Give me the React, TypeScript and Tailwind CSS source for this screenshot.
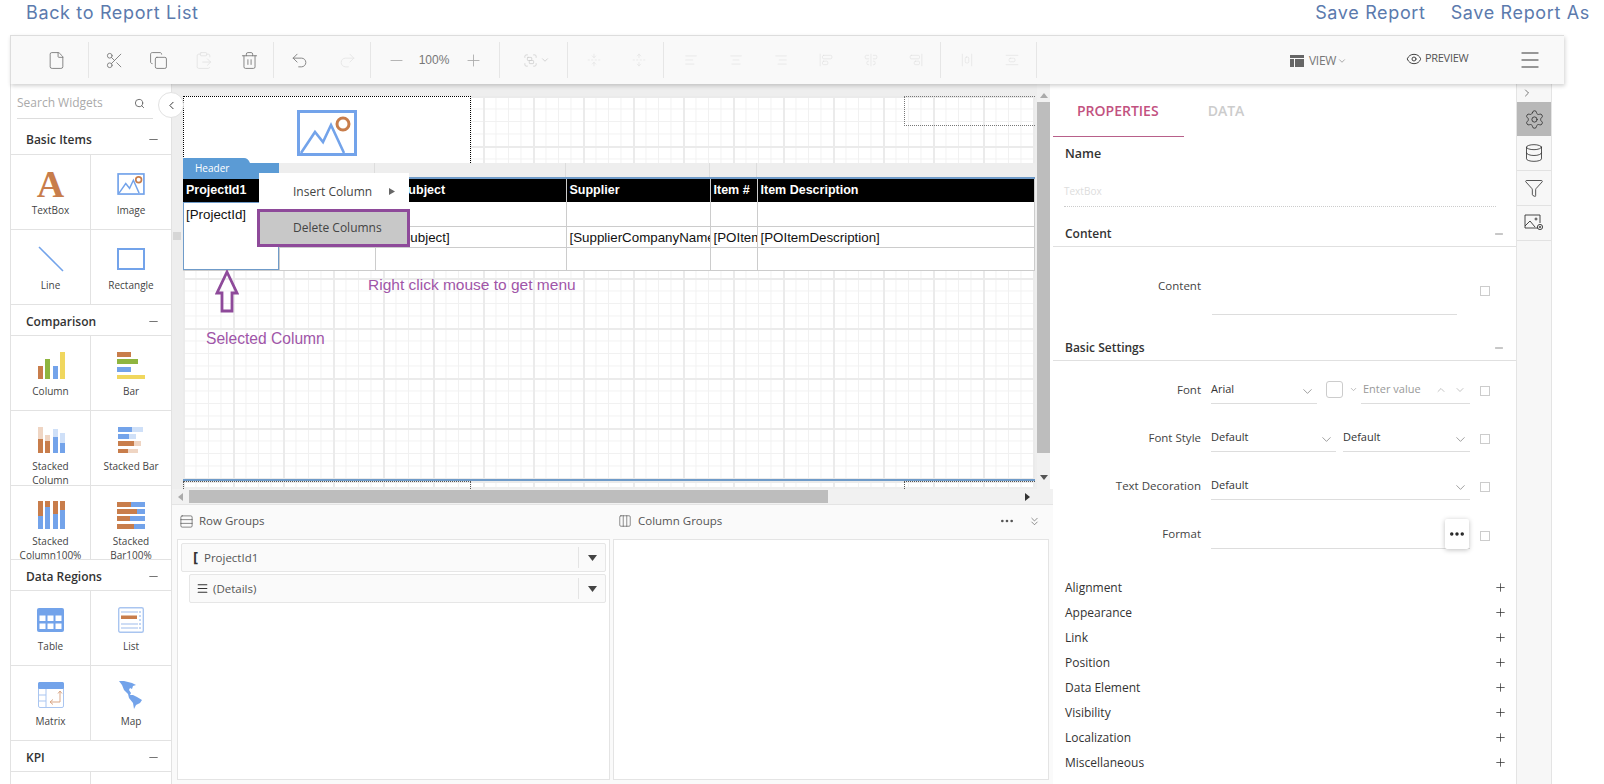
import React from "react";
import { File, Scissors, Copy, ClipboardPaste, Trash2, Undo2, Redo2, Minus, Plus, Search, ChevronLeft, ChevronRight, ChevronDown, ChevronUp, ChevronsDown, Eye, Settings, Database, Funnel, Rows3, Columns3, Ellipsis, Menu, Group, FoldVertical, UnfoldVertical, AlignLeft, AlignCenter, AlignRight, AlignStartVertical, AlignCenterVertical, AlignEndVertical, AlignHorizontalSpaceAround, AlignVerticalSpaceAround } from "lucide-react";

const B = "#c87d4b", U = "#73a3ea", G = "#8fb53f", Y = "#f0d75e", LB = "#cfe0f8", LO = "#efd5c3";

const gridBg = "bg-white bg-[linear-gradient(to_right,#ebebeb_2px,transparent_2px),linear-gradient(to_bottom,#ebebeb_2px,transparent_2px),linear-gradient(to_right,#f1f1f1_1px,transparent_1px),linear-gradient(to_bottom,#f1f1f1_1px,transparent_1px)] bg-[size:50px_50px,50px_50px,12.5px_12.5px,12.5px_12.5px]";

function Sep({ className = "" }: { className?: string }) {
  return <div className={`w-px h-[36px] bg-[#e6e6e6] shrink-0 ${className}`} />;
}
function TB({ children, w = "w-[45px]", className = "" }: { children: React.ReactNode; w?: string; className?: string }) {
  return <div className={`${w} h-full flex items-center justify-center shrink-0 ${className}`}>{children}</div>;
}

function Toolbar() {
  const on = { size: 19, strokeWidth: 1.1, color: "#777" };
  const off = { size: 14, strokeWidth: 1, color: "#dedede" };
  return (
    <div className="relative z-20 ml-[10px] w-[1554px] h-[49px] bg-[#f9f9f9] border-t border-[#dddddd] border-l shadow-[1px_2px_4px_rgba(0,0,0,0.18)] flex items-center pl-[18px] [font-family:Open_Sans,sans-serif]">
      <TB w="w-[54px]"><File {...on} /></TB>
      <Sep className="ml-[5px]" />
      <TB w="w-[47px]"><Scissors {...on} className="translate-x-[2px]" /></TB>
      <TB><Copy {...on} /></TB>
      <TB><ClipboardPaste {...on} color="#e2e2e2" /></TB>
      <TB w="w-[47px]"><Trash2 {...on} /></TB>
      <Sep />
      <TB w="w-[50px]"><Undo2 {...on} /></TB>
      <TB w="w-[46px]"><Redo2 {...on} color="#e4e4e4" /></TB>
      <Sep />
      <TB w="w-[50px]"><Minus {...on} color="#aaa" /></TB>
      <div className="w-[26px] flex justify-center text-[12px] text-[#777] [font-family:Liberation_Sans,sans-serif] shrink-0">100%</div>
      <TB w="w-[52px]"><Plus {...on} color="#aaa" /></TB>
      <Sep />
      <TB w="w-[67px]">
        <div className="flex items-center gap-[2px] translate-x-[3px]"><Group size={15} strokeWidth={1.2} color="#cccccc" /><ChevronDown size={10} color="#cccccc" /></div>
      </TB>
      <Sep />
      <TB className="ml-[3px]"><FoldVertical {...off} /></TB>
      <TB><UnfoldVertical {...off} /></TB>
      <Sep className="ml-[2px]" />
      <TB className="ml-[4px]"><AlignLeft {...off} /></TB>
      <TB><AlignCenter {...off} /></TB>
      <TB><AlignRight {...off} /></TB>
      <TB><AlignStartVertical {...off} /></TB>
      <TB><AlignCenterVertical {...off} /></TB>
      <TB><AlignEndVertical {...off} /></TB>
      <Sep className="ml-[2px]" />
      <TB className="ml-[3px]"><AlignHorizontalSpaceAround {...off} /></TB>
      <TB><AlignVerticalSpaceAround {...off} /></TB>
      <Sep className="ml-[2px]" />
      <div className="ml-[253px] flex items-center w-[60px] mt-[2px] shrink-0">
        <svg width="14" height="12" viewBox="0 0 14 12" className="mr-[5px] shrink-0"><path d="M0 0h14v3H0zM0 4h4v8H0zM5 4h9v8H5z" fill="#666" /></svg>
        <span className="text-[12px] text-[#777] tracking-[-0.3px]">VIEW</span>
        <ChevronDown size={10} color="#999" className="ml-[1px]" />
      </div>
      <div className="ml-[56px] flex items-center -mt-[3px] w-[70px] shrink-0">
        <Eye size={16} strokeWidth={1.5} color="#444" className="mr-[3px]" />
        <span className="text-[11px] text-[#555] tracking-[-0.3px]">PREVIEW</span>
      </div>
      <div className="ml-[42px] shrink-0"><Menu size={24} strokeWidth={1.4} color="#777" /></div>
    </div>
  );
}

function Shape({ n }: { n: string }) {
  switch (n) {
    case "A":
      return <span className="[font-family:Liberation_Serif,serif] font-bold text-[38px] leading-[28px] text-[#c87d4b]">A</span>;
    case "image":
      return (
        <svg width="28" height="22" viewBox="0 0 58 46">
          <rect x="2" y="2" width="54" height="42" fill="none" stroke={U} strokeWidth="3.5" />
          <path d="M4 42 L18 22 L26 32 L34 15 L46 42" fill="none" stroke={U} strokeWidth="3" />
          <circle cx="45" cy="14" r="6" fill="none" stroke={B} strokeWidth="3.5" />
        </svg>
      );
    case "line":
      return <svg width="28" height="28" viewBox="0 0 28 28"><path d="M2 2 L26 26" stroke={U} strokeWidth="1.6" /></svg>;
    case "rect":
      return <svg width="28" height="22" viewBox="0 0 28 22"><rect x="1" y="1" width="26" height="20" fill="none" stroke={U} strokeWidth="2" /></svg>;
    case "column":
      return (
        <svg width="28" height="27" viewBox="0 0 28 27">
          <rect x="1" y="14" width="5" height="13" fill={B} /><rect x="8" y="7" width="5" height="20" fill={G} />
          <rect x="16" y="14" width="5" height="13" fill={U} /><rect x="23" y="0" width="5" height="27" fill={Y} />
        </svg>
      );
    case "bar":
      return (
        <svg width="28" height="27" viewBox="0 0 28 27">
          <rect x="0" y="0" width="14" height="5" fill={B} /><rect x="0" y="7" width="21" height="5" fill={G} />
          <rect x="0" y="15" width="14" height="5" fill={U} /><rect x="0" y="23" width="28" height="4" fill={Y} />
        </svg>
      );
    case "scol":
      return (
        <svg width="28" height="26" viewBox="0 0 28 26">
          <rect x="1" y="0" width="5" height="12" fill={LO} /><rect x="1" y="12" width="5" height="14" fill={B} />
          <rect x="8" y="8" width="5" height="6" fill={LO} /><rect x="8" y="14" width="5" height="12" fill={B} />
          <rect x="16" y="2" width="5" height="8" fill={LB} /><rect x="16" y="10" width="5" height="16" fill={U} />
          <rect x="23" y="6" width="5" height="10" fill={LB} /><rect x="23" y="16" width="5" height="10" fill={U} />
        </svg>
      );
    case "sbar":
      return (
        <svg width="26" height="28" viewBox="0 0 26 28">
          <rect x="0" y="1" width="14" height="5" fill={U} /><rect x="14" y="1" width="11" height="5" fill={LB} />
          <rect x="0" y="8" width="11" height="5" fill={U} /><rect x="11" y="8" width="7" height="5" fill={LB} />
          <rect x="0" y="15" width="16" height="5" fill={B} /><rect x="16" y="15" width="7" height="5" fill={LO} />
          <rect x="0" y="23" width="10" height="4" fill={B} /><rect x="10" y="23" width="10" height="4" fill={LO} />
        </svg>
      );
    case "scol100":
      return (
        <svg width="28" height="28" viewBox="0 0 28 28">
          {[1, 8, 16, 23].map((x, i) => (
            <g key={x}><rect x={x} y="0" width="5" height="28" fill={U} /><rect x={x} y="0" width="5" height={[15, 6, 13, 9][i]} fill={B} /></g>
          ))}
        </svg>
      );
    case "sbar100":
      return (
        <svg width="28" height="28" viewBox="0 0 28 28">
          {[1, 8, 15, 23].map((y, i) => (
            <g key={y}><rect x="0" y={y} width="28" height="5" fill={U} /><rect x="0" y={y} width={[14, 20, 13, 17][i]} height="5" fill={B} /></g>
          ))}
        </svg>
      );
    case "table":
      return (
        <svg width="27" height="24" viewBox="0 0 27 24">
          <rect width="27" height="24" rx="2" fill={U} />
          {[2, 10, 18].map((x) => [8, 16].map((y) => <rect key={x + "-" + y} x={x + 0.5} y={y - 0.5} width="6" height="5.5" fill="#fff" />))}
        </svg>
      );
    case "list":
      return (
        <svg width="26" height="26" viewBox="0 0 26 26">
          <rect x="0.7" y="0.7" width="24.6" height="24.6" rx="1.5" fill="none" stroke="#a9c5f0" strokeWidth="1.4" />
          <path d="M3 5h17M3 17h17M3 21h17" stroke="#9dbcec" strokeWidth="1.2" />
          <rect x="3" y="8.5" width="16" height="3.5" fill={B} />
          <path d="M22 4v18" stroke="#9dbcec" strokeWidth="1.2" strokeDasharray="2 2" />
        </svg>
      );
    case "matrix":
      return (
        <svg width="26" height="26" viewBox="0 0 26 26">
          <rect x="0.5" y="0.5" width="25" height="25" rx="1.5" fill="none" stroke="#a9c5f0" />
          <rect width="26" height="7" rx="1.5" fill={U} />
          <path d="M8 7v19M0 13h8M0 19h8" stroke="#a9c5f0" />
          <path d="M22 9v11H12M12 20l3-2.5M12 20l3 2.5M22 9l-2 2.5M22 9l2 2.5" fill="none" stroke="#d9a787" />
        </svg>
      );
    case "map":
      return (
        <svg width="24" height="28" viewBox="0 0 24 28">
          <path d="M0 0 L5 0 L9 1 L13 2 L17 4 L14 5 L13 8 L11 7 L10 9 L12 12 L11 14 L14 14 L18 16 L23 19 L21 22 L17 24 L15 28 L14 22 L10 17 L9 13 L5 9 L3 4 Z" fill={U} />
        </svg>
      );
  }
  return null;
}

function Item({ icon, label, h = "h-[75px]", right }: { icon: string; label: React.ReactNode; h?: string; right?: boolean }) {
  return (
    <div className={`${h} ${right ? "" : "border-r border-[#e2e2e2]"} border-b border-[#e2e2e2] flex flex-col items-center pt-[15px]`}>
      <div className="h-[28px] flex items-center justify-center shrink-0"><Shape n={icon} /></div>
      <div className="mt-[5px] text-[10px] leading-[14px] text-[#444] text-center">{label}</div>
    </div>
  );
}

function Head({ t, h = "h-[31px]", pt = "pt-[3px]" }: { t: string; h?: string; pt?: string }) {
  return (
    <div className={`${h} ${pt} flex items-center justify-between pl-[15px] pr-[11px] border-b border-[#e2e2e2]`}>
      <span className="text-[12px] font-semibold text-[#333]">{t}</span>
      <Minus size={13} strokeWidth={1.5} color="#555" />
    </div>
  );
}

function Sidebar() {
  return (
    <div className="w-[162px] h-full shrink-0 overflow-hidden bg-white border-l border-r border-[#e2e2e2] [font-family:Open_Sans,sans-serif]">
      <div className="h-[35px] mx-[6px] w-[136px] flex items-center justify-between border-b border-[#dddddd] pr-[8px] pt-[4px]">
        <span className="text-[12px] text-[#aaa]">Search Widgets</span>
        <Search size={11} strokeWidth={2} color="#666" />
      </div>
      <Head t="Basic Items" h="h-[36px]" pt="pt-[6px]" />
      <div className="grid grid-cols-[80px_1fr]">
        <Item icon="A" label="TextBox" />
        <Item icon="image" label="Image" right />
        <Item icon="line" label="Line" />
        <Item icon="rect" label="Rectangle" right />
      </div>
      <Head t="Comparison" />
      <div className="grid grid-cols-[80px_1fr]">
        <Item icon="column" label="Column" />
        <Item icon="bar" label="Bar" right />
        <Item icon="scol" label={<>Stacked<br />Column</>} />
        <Item icon="sbar" label="Stacked Bar" right />
        <Item icon="scol100" label={<>Stacked<br />Column100%</>} h="h-[74px]" />
        <Item icon="sbar100" label={<>Stacked<br />Bar100%</>} h="h-[74px]" right />
      </div>
      <Head t="Data Regions" />
      <div className="grid grid-cols-[80px_1fr]">
        <Item icon="table" label="Table" />
        <Item icon="list" label="List" right />
        <Item icon="matrix" label="Matrix" />
        <Item icon="map" label="Map" right />
      </div>
      <Head t="KPI" />
      <div className="grid grid-cols-[80px_1fr]">
        <Item icon="" label="" />
        <Item icon="" label="" right />
      </div>
    </div>
  );
}

const hCell = "border-r border-[#cccccc] px-[3px] text-left font-bold text-white text-[12.5px] overflow-hidden whitespace-nowrap";
const dCell = "border-r border-b border-[#cccccc] pl-[3px] pr-0 pt-[2px] text-left font-normal text-[#111] text-[13.33px] overflow-hidden whitespace-nowrap";

function ReportTable() {
  return (
    <table className="table-fixed border-collapse w-[852px] bg-white [font-family:Liberation_Sans,sans-serif] leading-none">
      <colgroup>
        <col className="w-[96px]" /><col className="w-[96px]" /><col className="w-[191px]" /><col className="w-[144px]" /><col className="w-[47px]" /><col />
      </colgroup>
      <tbody>
        <tr className="h-[23px] bg-black">
          <td className={hCell}>ProjectId1</td><td className={hCell}></td><td className={hCell}>PO Subject</td><td className={hCell}>Supplier</td><td className={hCell}>Item #</td><td className={hCell}>Item Description</td>
        </tr>
        <tr className="h-[24px]">
          <td rowSpan={3} className={`${dCell} align-top !pt-[6px]`}>[ProjectId]</td>
          <td className={dCell}></td><td className={dCell}></td><td className={dCell}></td><td className={dCell}></td><td className={dCell}></td>
        </tr>
        <tr className="h-[21px]">
          <td className={dCell}></td><td className={dCell}>[POSubject]</td><td className={dCell}>[SupplierCompanyName]</td><td className={dCell}>[POItemNo]</td><td className={dCell}>[POItemDescription]</td>
        </tr>
        <tr className="h-[23px]">
          <td className={dCell}></td><td className={dCell}></td><td className={dCell}></td><td className={dCell}></td><td className={dCell}></td>
        </tr>
      </tbody>
    </table>
  );
}

function Design() {
  return (
    <div className="relative w-[865px] h-[405px] overflow-hidden bg-[#eeeeee]">
      <div className="h-[12px]" />
      <div className="pl-[11px]">
        {/* report header */}
        <div className={`relative h-[67px] w-[852px] ${gridBg}`}>
          <div className="w-[288px] h-[67px] bg-white border-r border-l border-t border-dotted border-black flex justify-center pt-[13px]">
            <svg width="60" height="46" viewBox="0 0 60 46">
              <rect x="1.5" y="1.5" width="57" height="43" fill="#fff" stroke={U} strokeWidth="3" />
              <path d="M4 43 L18 22 L26 32 L34 15 L47 43" fill="none" stroke={U} strokeWidth="2.6" />
              <circle cx="46" cy="14" r="6" fill="none" stroke={B} strokeWidth="3" />
            </svg>
          </div>
          <div className="absolute right-0 top-0 w-[131px] h-[30px] border-l border-b border-t border-dotted border-[#777]" />
        </div>
        {/* header band */}
        <div className="h-[14px] w-[852px] bg-[#eeeeee] flex">
          {[96, 96, 191, 144, 47].map((w, i) => (
            <div key={i} style={{ width: w }} className="border-r border-[#dddddd] h-full" />
          ))}
        </div>
        {/* body */}
        <div className={`w-[852px] h-[302px] border-t-2 border-[#6f9bc9] ${gridBg} bg-[position:0_-1px]`}>
          <ReportTable />
        </div>
        {/* footer */}
        <div className={`w-[852px] h-[8px] border-t-2 border-[#6f9bc9] ${gridBg}`}>
          <div className="flex justify-between">
            <div className="w-[288px] h-[8px] border-t border-r border-l border-dotted border-[#555]" />
            <div className="w-[131px] h-[8px] border-t border-l border-dotted border-[#555]" />
          </div>
        </div>
      </div>
      {/* left ruler handle */}
      <div className="absolute left-0 top-[148px] w-[8px] h-[8px] ml-[1px] bg-[#d6d6d6]" />
      {/* tab */}
      <div className="absolute left-[11px] top-[74px] w-[96px] h-[21px]">
        <svg width="96" height="21" viewBox="0 0 96 21" className="absolute inset-0"><path d="M0 0 H61 Q65 0 67 5 H96 V21 H0 Z" fill="#5b9bd5" /></svg>
        <span className="absolute left-[12px] top-[3px] text-[10px] text-white [font-family:Open_Sans,sans-serif]">Header</span>
      </div>
      {/* selected col */}
      <div className="absolute left-[11px] top-[118px] w-[96px] h-[68px] border border-[#6f9bc9]" />
      {/* context menu */}
      <div className="absolute left-[87px] top-[89px] w-[150px] [font-family:Open_Sans,sans-serif] text-[12px] text-[#444]">
        <div className="h-[37px] bg-white flex items-center pl-[34px] pr-[14px] justify-between">
          <span>Insert Column</span>
          <svg width="6" height="7" viewBox="0 0 6 7"><path d="M0 0L6 3.5L0 7Z" fill="#666" /></svg>
        </div>
        <div className="h-[38px] -ml-[2px] w-[153px] -mt-[1px] bg-[#c8c8c8] border-[3px] border-[#8e4a9a] flex items-center pl-[33px]">Delete Columns</div>
      </div>
      {/* annotations */}
      <svg width="24" height="44" viewBox="0 0 24 44" className="absolute left-[43px] top-[186px]">
        <path d="M12 2 L22 23 H17 V41 H7 V23 H2 Z" fill="none" stroke="#8e4a9a" strokeWidth="2.8" />
      </svg>
      <div className="absolute left-[34px] top-[246px] text-[15.6px] leading-[18px] text-[#a055a8] [font-family:Liberation_Sans,sans-serif] whitespace-nowrap">Selected Column</div>
      <div className="absolute left-[196px] top-[192px] text-[15.5px] leading-[18px] text-[#a055a8] [font-family:Liberation_Sans,sans-serif] whitespace-nowrap">Right click mouse to get menu</div>
    </div>
  );
}

function Bottom() {
  return (
    <div className="flex-1 min-h-0 bg-[#fafafa] border-t border-[#e4e4e4] [font-family:Open_Sans,sans-serif] text-[11.5px] text-[#555] overflow-hidden">
      <div className="h-[34px] pb-[2px] flex items-center relative whitespace-nowrap">
        <Rows3 size={15} strokeWidth={1} color="#444" className="ml-[7px] shrink-0" />
        <span className="ml-[5px] w-[70px]">Row Groups</span>
        <Columns3 size={14} strokeWidth={1} color="#444" className="ml-[349px] shrink-0" />
        <span className="ml-[6px] w-[90px]">Column Groups</span>
        <Ellipsis size={16} strokeWidth={2} color="#555" className="ml-[271px] shrink-0" />
        <ChevronsDown size={13} strokeWidth={1.2} color="#555" className="ml-[13px] shrink-0" />
      </div>
      <div className="flex pl-[5px] gap-[3px] h-[241px]">
        <div className="w-[433px] h-full bg-white border border-[#e4e4e4] p-[3px] flex flex-col gap-[2px]">
          <GroupRow icon={<span className="text-[15px] font-bold -mt-[2px] text-[#333]">[</span>} label="ProjectId1" gap="ml-[6px]" pad="pl-[11px]" />
          <div className="pl-[8px]">
            <GroupRow icon={<Menu size={13} strokeWidth={2} color="#333" />} label="(Details)" gap="ml-[4px]" pad="pl-[6px]" />
          </div>
        </div>
        <div className="w-[436px] h-full bg-white border border-[#e4e4e4]" />
      </div>
    </div>
  );
}

function GroupRow({ icon, label, gap, pad }: { icon: React.ReactNode; label: string; gap: string; pad: string }) {
  return (
    <div className={`h-[29px] flex items-center bg-[#fafafa] border border-[#e6e6e6] rounded-[2px] ${pad}`}>
      {icon}
      <span className={`${gap} flex-1`}>{label}</span>
      <div className="w-[27px] h-[21px] border-l border-[#e4e4e4] flex items-center justify-center">
        <svg width="9" height="6" viewBox="0 0 9 6"><path d="M0 0H9L4.5 6Z" fill="#444" /></svg>
      </div>
    </div>
  );
}

function Scrollbars() {
  return (
    <div className="w-[13px] h-[405px] bg-[#f1f1f1] flex flex-col items-center shrink-0">
      <svg width="8" height="5" viewBox="0 0 8 5" className="mt-[9px]"><path d="M0 5L4 0L8 5Z" fill="#aaa" /></svg>
      <div className="w-[13px] h-[351px] bg-[#bdbdbd] mt-[4px]" />
      <svg width="8" height="5" viewBox="0 0 8 5" className="mt-[22px]"><path d="M0 0L8 0L4 5Z" fill="#555" /></svg>
    </div>
  );
}

function Check() {
  return <div className="w-[10px] h-[10px] border border-[#cccccc] shrink-0" />;
}
function Sel({ t, w, className = "" }: { t: string; w: string; className?: string }) {
  return (
    <div className={`${w} h-[24px] flex items-center justify-between border-b border-[#dddddd] pr-[2px] text-[11px] text-[#333] shrink-0 ${className}`}>
      <span className="-mt-[4px]">{t}</span>
      <ChevronDown size={15} strokeWidth={1} color="#666" />
    </div>
  );
}
function Row({ label, children, check = "mt-0" }: { label: string; children: React.ReactNode; check?: string }) {
  return (
    <div className="h-[48px] flex items-center">
      <div className="w-[148px] text-right text-[11.5px] text-[#444] shrink-0 -mt-[2px]">{label}</div>
      <div className="w-[259px] ml-[10px] flex items-center shrink-0 mt-[2px]">{children}</div>
      <div className={`ml-[10px] ${check}`}><Check /></div>
    </div>
  );
}
function Section({ t, h }: { t: string; h: string }) {
  return (
    <div className={`${h} flex items-end justify-between pl-[12px] pr-[11px] pb-[3px] border-b border-[#e0e0e0]`}>
      <span className="text-[12px] font-semibold text-[#333] leading-[18px]">{t}</span>
      <Minus size={12} strokeWidth={1.3} color="#555" className="mb-[3px]" />
    </div>
  );
}

function Props() {
  return (
    <div className="w-[463px] h-full shrink-0 bg-white [font-family:Open_Sans,sans-serif] overflow-hidden">
      <div className="h-[52px] relative flex items-center text-[14px] font-semibold">
        <span className="ml-[24px] text-[#c2527f]">PROPERTIES</span>
        <span className="ml-[49px] text-[#cccccc]">DATA</span>
      </div>
      <div className="w-[131px] h-px bg-[#b8608a]" />
      <div className="pl-[12px] pt-[8px] text-[12.5px] font-semibold text-[#333] leading-[18px]">Name</div>
      <div className="ml-[11px] mr-[20px] mt-[21px] h-[23px] border-b border-dotted border-[#cccccc] text-[10px] text-[#dddddd] leading-[14px]">TextBox</div>
      <Section t="Content" h="h-[40px]" />
      <div className="h-[85px] relative flex">
        <div className="w-[148px] text-right text-[11.5px] text-[#444] mt-[30px]">Content</div>
        <div className="w-[245px] ml-[11px] h-[68px] border-b border-[#dddddd]" />
        <div className="ml-[23px] mt-[39px]"><Check /></div>
      </div>
      <Section t="Basic Settings" h="h-[29px]" />
      <div className="mt-[6px]">
        <Row label="Font">
          <Sel t="Arial" w="w-[106px]" />
          <div className="w-[17px] h-[17px] ml-[9px] border border-[#cccccc] rounded-[3px] shrink-0 -mt-[6px]" />
          <ChevronDown size={9} color="#aaa" className="ml-[6px] -mt-[6px]" />
          <div className="ml-[3px] flex-1 h-[24px] flex items-center border-b border-[#dddddd] text-[11px] text-[#999]">
            <span className="ml-[2px] -mt-[4px]">Enter value</span>
            <ChevronUp size={12} strokeWidth={1} color="#888" className="ml-[14px] -mt-[4px]" />
            <ChevronDown size={12} strokeWidth={1} color="#888" className="ml-[7px] -mt-[4px]" />
          </div>
        </Row>
        <Row label="Font Style">
          <Sel t="Default" w="w-[125px]" />
          <Sel t="Default" w="w-[127px]" className="ml-[7px]" />
        </Row>
        <Row label="Text Decoration"><Sel t="Default" w="w-[259px]" /></Row>
        <Row label="Format" check="mt-[2px]">
          <div className="relative w-[259px] h-[24px] border-b border-[#dddddd] mt-[2px]">
            <div className="absolute right-[1px] -top-[6px] w-[24px] h-[30px] bg-white rounded-[2px] shadow-[0_1px_5px_rgba(0,0,0,0.25)] flex items-center justify-center">
              <Ellipsis size={18} strokeWidth={2.6} color="#222" />
            </div>
          </div>
        </Row>
      </div>
      <div className="mt-[16px]">
        {["Alignment", "Appearance", "Link", "Position", "Data Element", "Visibility", "Localization", "Miscellaneous"].map((t) => (
          <div key={t} className="h-[25px] flex items-center justify-between pl-[12px] pr-[9px] text-[12px] text-[#333]">
            <span>{t}</span>
            <Plus size={13} strokeWidth={1.4} color="#333" />
          </div>
        ))}
      </div>
    </div>
  );
}

function Rail() {
  const c = { strokeWidth: 1, color: "#333" };
  return (
    <div className="w-[36px] h-full shrink-0 bg-[#f7f7f7] border-l border-r border-[#e4e4e4] flex flex-col">
      <div className="h-[18px] flex items-center pl-[4px]"><ChevronRight size={12} strokeWidth={1.3} color="#333" /></div>
      <div className="h-[34px] bg-[#b8b8b8] flex items-center justify-center"><Settings size={21} {...c} /></div>
      <div className="h-[35px] border-b border-[#e2e2e2] flex items-center justify-center"><Database size={20} {...c} /></div>
      <div className="h-[35px] border-b border-[#e2e2e2] flex items-center justify-center"><Funnel size={20} {...c} /></div>
      <div className="h-[35px] border-b border-[#e2e2e2] flex items-center justify-center">
        <svg width="20" height="18" viewBox="0 0 20 18" fill="none" stroke="#333" strokeWidth="0.9">
          <path d="M14 14H1V1h15v8" /><path d="M1 12l5-5 5 6" /><circle cx="12" cy="5" r="1" /><circle cx="16" cy="13" r="2.6" /><circle cx="16" cy="13" r="0.8" />
        </svg>
      </div>
    </div>
  );
}

export default function App() {
  return (
    <div className="relative w-[1604px] h-[784px] overflow-hidden bg-white">
      <div className="h-[35px] flex items-center justify-between pl-[26px] pr-[14px] text-[18px] tracking-[0.65px] text-[#5b7aad] [font-family:Inter,sans-serif] pb-[11px]">
        <span>Back to Report List</span>
        <div className="flex gap-[25px]"><span>Save Report</span><span>Save Report As</span></div>
      </div>
      <Toolbar />
      <div className="ml-[10px] h-[700px] flex">
        <Sidebar />
        <div className="w-[881px] h-full shrink-0 flex flex-col bg-[#f5f5f5]">
          <div className="flex h-[405px] shrink-0">
            <Design />
            <Scrollbars />
            <div className="w-[3px] bg-white" />
          </div>
          <div className="h-[15px] shrink-0 bg-[#f1f1f1] flex items-center relative">
            <svg width="5" height="8" viewBox="0 0 5 8" className="ml-[6px]"><path d="M5 0V8L0 4Z" fill="#aaa" /></svg>
            <div className="w-[639px] h-[13px] bg-[#bdbdbd] ml-[6px]" />
            <svg width="5" height="8" viewBox="0 0 5 8" className="ml-[197px]"><path d="M0 0V8L5 4Z" fill="#333" /></svg>
          </div>
          <Bottom />
        </div>
        <Props />
        <Rail />
      </div>
      {/* sidebar collapse button */}
      <div className="absolute z-10 left-[158px] top-[92px] w-[26px] h-[26px] rounded-full bg-white border border-[#e2e2e2] flex items-center justify-center">
        <ChevronLeft size={13} strokeWidth={1.8} color="#333" />
      </div>
    </div>
  );
}
